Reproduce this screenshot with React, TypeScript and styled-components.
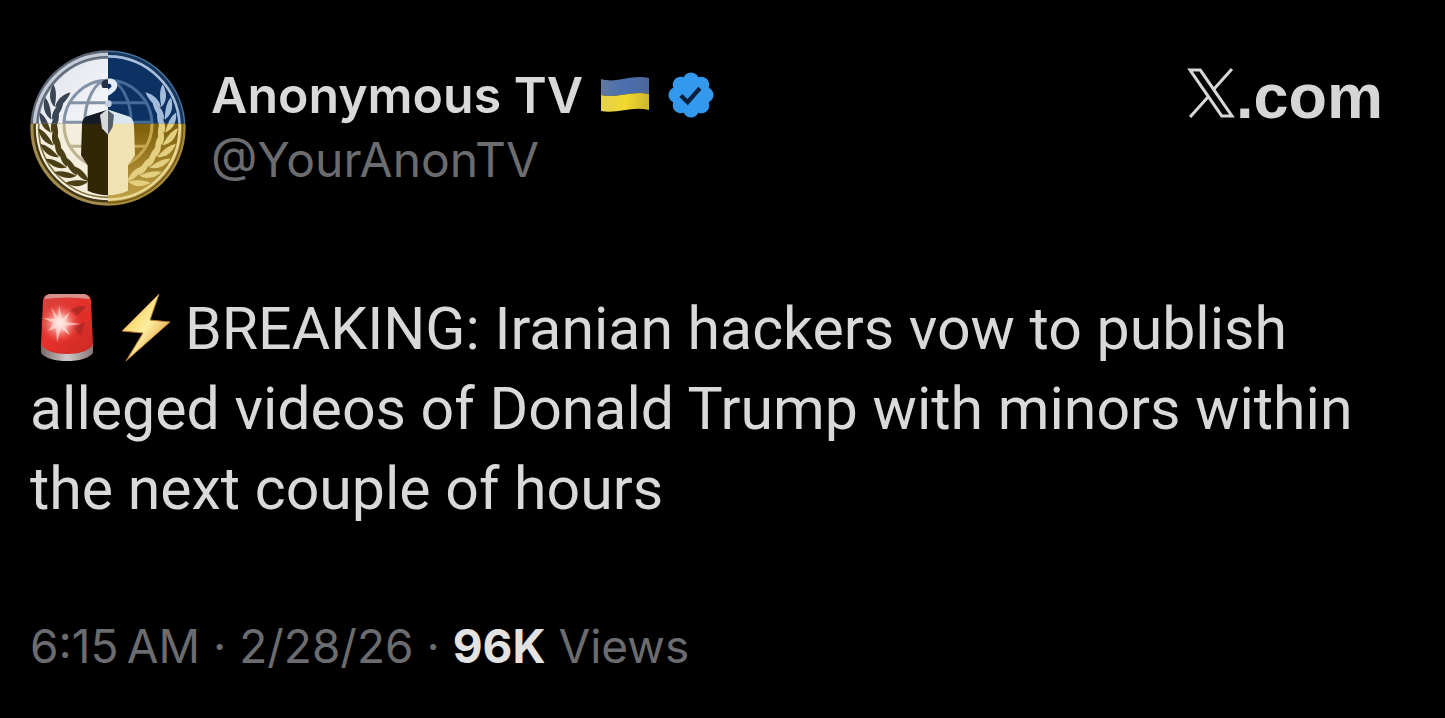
import React from 'react';
import styled, { createGlobalStyle } from 'styled-components';

const GlobalStyle = createGlobalStyle`
  *, *::before, *::after { box-sizing: border-box; }
  body { margin: 0; background: #000; }
`;

const Post = styled.article`
  padding: 50px 30px;
  color: #d9d9d9;
  font-family: Inter, "Liberation Sans", sans-serif;
`;

const Header = styled.header`
  display: flex;
  align-items: flex-start;
  justify-content: space-between;
  padding-right: 32px;
`;

const Author = styled.div`
  display: flex;
  align-items: center;
  gap: 25px;
`;

const AvatarArt = styled.svg`
  display: block;
  flex: none;
  width: 156px;
  height: 156px;
`;

const Names = styled.div`
  display: flex;
  flex-direction: column;
  gap: 2px;
`;

const NameRow = styled.div`
  display: flex;
  align-items: center;
  gap: 17px;
  height: 62px;
`;

const Name = styled.h1`
  margin: 0;
  font-size: 50px;
  font-weight: 600;
  line-height: 62px;
  white-space: nowrap;
`;

const Handle = styled.a`
  color: #6b6c6f;
  font-size: 48px;
  line-height: 64px;
  text-decoration: none;
`;

const FlagArt = styled.svg`
  flex: none;
  width: 50px;
  height: 38px;
`;

const BadgeArt = styled.svg`
  flex: none;
  width: 48px;
  height: 48px;
`;

const Brand = styled.a`
  display: flex;
  align-items: baseline;
  gap: 1px;
  margin-top: 10px;
  color: #d6d6d6;
  font-family: "Liberation Sans", Arial, sans-serif;
  font-size: 63px;
  font-weight: 700;
  line-height: 72px;
  text-decoration: none;
`;

const BrandMark = styled.svg`
  width: 48px;
  height: 50px;
`;

const Body = styled.p`
  margin: 83px 0 0;
  font-family: Roboto, "Noto Sans", sans-serif;
  font-size: 59px;
  line-height: 80px;
`;

const SirenArt = styled.svg`
  width: 56px;
  height: 70px;
  margin-left: 9px;
  vertical-align: -13px;
`;

const BoltArt = styled.svg`
  width: 52px;
  height: 70px;
  margin: 0 13px 0 25px;
  vertical-align: -13px;
`;

const Meta = styled.footer`
  margin-top: 89px;
  color: #6b6c6f;
  font-size: 46px;
  line-height: 56px;
`;

const Count = styled.strong`
  color: #e2e2e2;
  font-weight: 700;
`;

const leafNodes = [112, 125, 138, 151, 164, 177, 190, 203];

function Laurel({ fill }: { fill: string }) {
  return (
    <g fill={fill}>
      {leafNodes.map((deg) => {
        const a = (deg * Math.PI) / 180;
        const x = 262 + 172 * Math.cos(a);
        const y = 262 + 172 * Math.sin(a);
        return (
          <g key={deg} transform={`translate(${x} ${y}) rotate(${deg + 90})`}>
            <path d="M-6 0C6 -24 28 -33 56 -30C46 -14 18 -4 -6 0Z" />
            <path d="M-6 2C14 -3 38 6 54 27C30 28 8 20 -6 2Z" />
          </g>
        );
      })}
    </g>
  );
}

function Avatar() {
  return (
    <AvatarArt viewBox="28 29 468 468" role="img" aria-label="Anonymous TV avatar">
      <defs>
        <clipPath id="top-left"><path d="M0 0H262V250H0Z" /></clipPath>
        <clipPath id="top-right"><path d="M262 0H540V250H262Z" /></clipPath>
        <clipPath id="bottom-left"><path d="M0 250H262V540H0Z" /></clipPath>
        <clipPath id="bottom-right"><path d="M262 250H540V540H262Z" /></clipPath>
        <linearGradient id="silver" x1="0" y1="0" x2="1" y2="1">
          <stop offset="0" stopColor="#dfe3ea" />
          <stop offset="0.5" stopColor="#f7f8fb" />
        </linearGradient>
        <linearGradient id="gold" x1="0" y1="0" x2="0" y2="1">
          <stop offset="0.5" stopColor="#80620d" />
          <stop offset="1" stopColor="#c3a349" />
        </linearGradient>
      </defs>
      <g clipPath="url(#top-left)">
        <circle cx="262" cy="263" r="233" fill="#5b6573" />
        <circle cx="262" cy="263" r="221" fill="none" stroke="#c3cad6" strokeWidth="10" />
        <circle cx="262" cy="263" r="210" fill="url(#silver)" stroke="#6f7a8a" strokeWidth="4" />
      </g>
      <g clipPath="url(#top-right)">
        <circle cx="262" cy="263" r="233" fill="#16375d" />
        <circle cx="262" cy="263" r="215" fill="#0b3262" stroke="#a7bdda" strokeWidth="8" />
        <circle cx="262" cy="263" r="230" fill="none" stroke="#4f749c" strokeWidth="4" />
      </g>
      <g clipPath="url(#bottom-left)">
        <circle cx="262" cy="263" r="233" fill="#a28b4d" />
        <circle cx="262" cy="263" r="220" fill="#f4efdd" stroke="#453817" strokeWidth="7" />
        <circle cx="262" cy="263" r="208" fill="none" stroke="#82703e" strokeWidth="5" />
      </g>
      <g clipPath="url(#bottom-right)">
        <circle cx="262" cy="263" r="233" fill="#a58a3e" />
        <circle cx="262" cy="263" r="215" fill="url(#gold)" stroke="#ead893" strokeWidth="8" />
        <circle cx="262" cy="263" r="224" fill="none" stroke="#75570d" strokeWidth="4" />
      </g>

      <g fill="none" stroke="#8492a8" strokeWidth="9">
        <g clipPath="url(#top-left)">
          <circle cx="262" cy="252" r="132" />
          <ellipse cx="262" cy="252" rx="70" ry="132" />
          <path d="M145 187H262M130 246H262" />
        </g>
        <g clipPath="url(#top-right)" stroke="#456b98">
          <circle cx="262" cy="252" r="132" />
          <ellipse cx="262" cy="252" rx="70" ry="132" />
          <path d="M262 187H379M262 246H394" />
        </g>
        <g clipPath="url(#bottom-left)" stroke="#bdb391">
          <circle cx="262" cy="252" r="132" />
          <ellipse cx="262" cy="252" rx="70" ry="132" />
          <path d="M145 318H262" />
        </g>
        <g clipPath="url(#bottom-right)" stroke="#c4a750">
          <circle cx="262" cy="252" r="132" />
          <ellipse cx="262" cy="252" rx="70" ry="132" />
          <path d="M262 318H379" />
        </g>
      </g>

      <g clipPath="url(#top-left)"><Laurel fill="#394454" /></g>
      <g clipPath="url(#bottom-left)"><Laurel fill="#4b3f18" /></g>
      <g transform="translate(524 0) scale(-1 1)">
        <g clipPath="url(#top-left)"><Laurel fill="#a4bcdb" /></g>
        <g clipPath="url(#bottom-left)"><Laurel fill="#e3cf80" /></g>
      </g>

      <path d="M262 208L196 229Q184 236 184 256L181 345L201 375V451Q230 464 262 465Z" fill="#302706" />
      <path d="M262 208L196 229Q186 234 185 250H262Z" fill="#141b26" />
      <path d="M262 208L326 229Q338 236 340 256L343 345L322 375V451Q294 464 262 465Z" fill="#f1e3b1" />
      <path d="M262 208L326 229Q336 234 339 250H262Z" fill="#dbe6f3" />
      <path d="M262 205L238 224L244 264L262 283Z" fill="#d6d8d9" />
      <path d="M262 210L280 224L276 260L262 283Z" fill="#53606c" />
      <path d="M262 118C244 116 237 132 246 143H262Z" fill="#253144" />
      <path d="M262 115C288 112 298 136 283 151C272 160 268 164 262 166V148L272 140C274 132 268 128 262 131Z" fill="#e4edf8" />
      <circle cx="263" cy="190" r="10" fill="#c3d0e0" />
    </AvatarArt>
  );
}

function UkraineFlag() {
  return (
    <FlagArt viewBox="0 0 50 38" role="img" aria-label="Flag of Ukraine">
      <defs>
        <linearGradient id="flag-blue" x1="0" x2="1">
          <stop offset="0" stopColor="#60789f" />
          <stop offset="0.5" stopColor="#4a6fb0" />
          <stop offset="1" stopColor="#4c6899" />
        </linearGradient>
        <linearGradient id="flag-yellow" x1="0" x2="1">
          <stop offset="0" stopColor="#e5d04d" />
          <stop offset="0.5" stopColor="#f1d92e" />
          <stop offset="1" stopColor="#cdb62d" />
        </linearGradient>
      </defs>
      <path d="M1 3C17 8 31 -2 49 2V18C32 14 17 23 1 19Z" fill="url(#flag-blue)" />
      <path d="M1 19C17 23 32 14 49 18V34C32 30 17 38 1 35Z" fill="url(#flag-yellow)" />
    </FlagArt>
  );
}

function VerifiedBadge() {
  return (
    <BadgeArt viewBox="1 1 20 20" role="img" aria-label="Verified account">
      <path
        d="M20.396 11c-.018-.646-.215-1.275-.57-1.816-.354-.54-.852-.972-1.438-1.246.223-.607.27-1.264.14-1.897-.131-.634-.437-1.218-.882-1.687-.47-.445-1.053-.75-1.687-.882-.633-.13-1.29-.083-1.897.14-.273-.587-.704-1.086-1.245-1.44S11.647 1.62 11 1.604c-.646.017-1.273.213-1.813.568s-.969.854-1.24 1.44c-.608-.223-1.267-.272-1.902-.14-.635.13-1.22.436-1.69.882-.445.47-.749 1.055-.878 1.688-.13.633-.08 1.29.144 1.896-.587.274-1.087.705-1.443 1.245-.356.54-.555 1.17-.574 1.817.02.647.218 1.276.574 1.817.356.54.856.972 1.443 1.245-.224.606-.274 1.263-.144 1.896.13.634.433 1.218.877 1.688.47.443 1.054.747 1.687.878.633.132 1.29.084 1.897-.136.274.586.705 1.084 1.246 1.439.54.354 1.17.551 1.816.569.647-.016 1.276-.213 1.817-.567s.972-.854 1.245-1.44c.604.239 1.266.296 1.903.164.636-.132 1.22-.447 1.68-.907.46-.46.776-1.044.908-1.681s.075-1.299-.165-1.903c.586-.274 1.084-.705 1.439-1.246.354-.54.551-1.17.569-1.816z"
        fill="#3399ee"
      />
      <path d="M6.8 11.2L9.6 14L14.7 8.2" fill="none" stroke="#06203c" strokeWidth="1.8" />
    </BadgeArt>
  );
}

function Siren() {
  return (
    <SirenArt viewBox="0 0 56 70" role="img" aria-label="Police car light">
      <defs>
        <linearGradient id="dome" x1="0" y1="0" x2="1" y2="1">
          <stop offset="0" stopColor="#d84440" />
          <stop offset="0.5" stopColor="#e5302a" />
          <stop offset="1" stopColor="#c92a24" />
        </linearGradient>
        <radialGradient id="glow">
          <stop offset="0" stopColor="#fff" />
          <stop offset="0.35" stopColor="#ffc4bc" stopOpacity="0.85" />
          <stop offset="1" stopColor="#f4574d" stopOpacity="0" />
        </radialGradient>
        <linearGradient id="base" x1="0" x2="1">
          <stop offset="0" stopColor="#776969" />
          <stop offset="0.5" stopColor="#d0c9c9" />
          <stop offset="1" stopColor="#857777" />
        </linearGradient>
      </defs>
      <path d="M2 51Q28 66 54 51V61Q47 69 28 69Q9 69 2 61Z" fill="url(#base)" />
      <path d="M4 8Q5 2 12 2H44Q51 2 52 8L54 53Q47 62 28 62Q9 62 2 53Z" fill="url(#dome)" />
      <path d="M5 7Q7 2 12 2H44Q49 2 51 7Q28 4 5 7Z" fill="#d8918b" />
      <path d="M31 19Q40 12 47 15L38 24ZM33 36L46 30L42 43Z" fill="#b32924" />
      <circle cx="21" cy="31" r="20" fill="url(#glow)" />
      <path d="M20 13L23 27L31 20L26 30L42 32L26 34L31 43L22 37L18 50L17 36L9 39L15 31L4 26L16 27L12 15L19 26Z" fill="#ffe5e0" opacity="0.65" />
    </SirenArt>
  );
}

function Bolt() {
  return (
    <BoltArt viewBox="0 0 52 70" role="img" aria-label="High voltage">
      <defs>
        <linearGradient id="bolt" x1="0" y1="0" x2="1" y2="1">
          <stop offset="0.2" stopColor="#f4cf5c" />
          <stop offset="0.5" stopColor="#fdeea0" />
          <stop offset="0.8" stopColor="#e5a748" />
        </linearGradient>
      </defs>
      <path d="M39 2L2 39L23 41L6 69L50 30L30 28Z" fill="url(#bolt)" stroke="#b77a35" strokeWidth="1" strokeLinejoin="round" />
    </BoltArt>
  );
}

function XMark() {
  return (
    <BrandMark viewBox="0 0 47 49" aria-hidden="true">
      <g fill="none" stroke="currentColor" strokeWidth="3">
        <path d="M3 2H13L44 47H34Z" />
        <path d="M44 1L26 21M3 48L21 28" />
      </g>
    </BrandMark>
  );
}

export default function App() {
  return (
    <>
      <GlobalStyle />
      <Post>
        <Header>
          <Author>
            <Avatar />
            <Names>
              <NameRow>
                <Name>Anonymous TV</Name>
                <UkraineFlag />
                <VerifiedBadge />
              </NameRow>
              <Handle href="#profile">@YourAnonTV</Handle>
            </Names>
          </Author>
          <Brand href="#home" aria-label="X.com">
            <XMark />
            <span>.com</span>
          </Brand>
        </Header>
        <Body>
          <Siren />
          <Bolt />
          BREAKING: Iranian hackers vow to publish alleged videos of Donald Trump with minors within the next couple of hours
        </Body>
        <Meta>
          <time dateTime="2026-02-28T06:15">6:15{'\u2009'}AM · 2/28/26</time> · <Count>96K</Count> Views
        </Meta>
      </Post>
    </>
  );
}
